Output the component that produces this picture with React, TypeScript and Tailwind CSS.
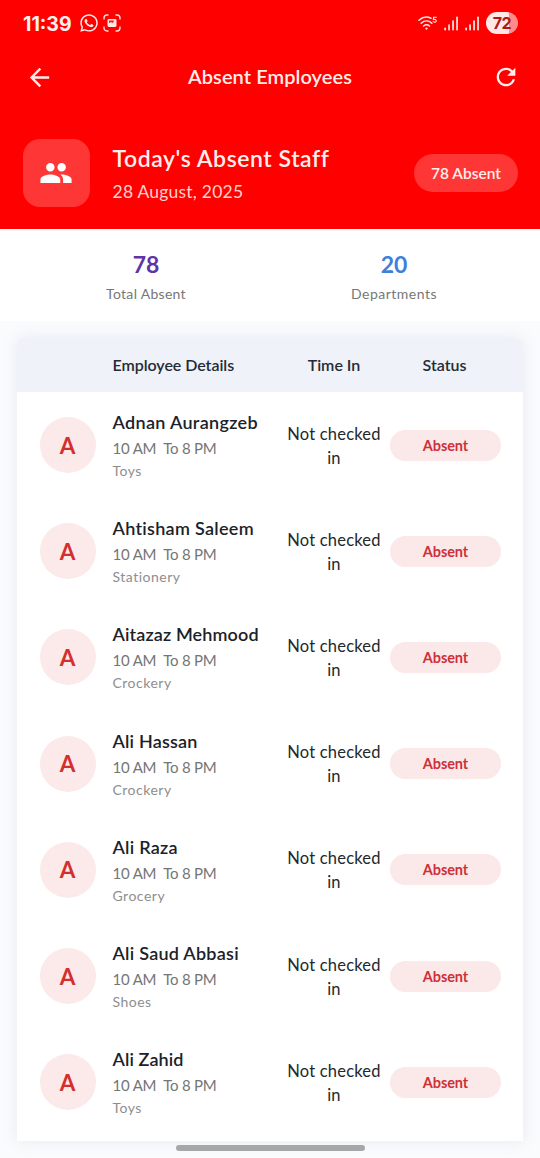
import { MdArrowBack, MdRefresh, MdPeople } from "react-icons/md";
import { FaWhatsapp } from "react-icons/fa";

type Employee = { name: string; department: string; nameTracking: string };

const employees: Employee[] = [
  { name: "Adnan Aurangzeb", department: "Toys", nameTracking: "tracking-[0.33px]" },
  { name: "Ahtisham Saleem", department: "Stationery", nameTracking: "tracking-[0.3px]" },
  { name: "Aitazaz Mehmood", department: "Crockery", nameTracking: "tracking-[0.13px]" },
  { name: "Ali Hassan", department: "Crockery", nameTracking: "tracking-[0.2px]" },
  { name: "Ali Raza", department: "Grocery", nameTracking: "tracking-[0.25px]" },
  { name: "Ali Saud Abbasi", department: "Shoes", nameTracking: "tracking-[0.26px]" },
  { name: "Ali Zahid", department: "Toys", nameTracking: "tracking-[0.1px]" },
];

function ScreenshotIcon() {
  return (
    <svg viewBox="0 0 18 18" className="h-[18px] w-[18px]" fill="none" stroke="#ffe9e6" strokeWidth="1.3" strokeLinecap="round">
      <path d="M1 5V4a3 3 0 0 1 3-3h1M13 1h1a3 3 0 0 1 3 3v1M17 13v1a3 3 0 0 1-3 3h-1M5 17H4a3 3 0 0 1-3-3v-1" />
      <rect x="4.500" y="5" width="9" height="8" rx="1.400" fill="#ffe9e6" stroke="none" />
      <path d="M6 9.300V6.600h4.800v1.100L9.400 8.900 8 8.100Z" fill="#ff1a14" stroke="none" />
    </svg>
  );
}

function WifiIcon() {
  return (
    <svg viewBox="0 0 20 15" className="h-[15px] w-5" fill="none" stroke="#ffe9e6" strokeWidth="1.5" strokeLinecap="round">
      <path d="M1 4.200C4.500 .9 9 .3 13 2.200M3.200 7.200c3.200-2.900 7.500-2.900 10.700 0M5.600 10c2-1.700 3.900-1.700 5.900 0" />
      <circle cx="8.500" cy="12.600" r="1.100" fill="#ffe9e6" stroke="none" />
      <path d="M18.300 1.200h-2.700l-.2 2.300c3.300-.8 3.600 2.600 1.500 2.700-.8 0-1.300-.2-1.700-.6" strokeWidth="1.100" />
    </svg>
  );
}

function SignalIcon() {
  return (
    <svg viewBox="0 0 15 15" className="h-[15px] w-[15px]" fill="#ffe9e6">
      <rect x="0.300" y="11.500" width="1.700" height="3" rx=".7" />
      <rect x="4.200" y="8.300" width="1.700" height="6.200" rx=".7" />
      <rect x="8.200" y="4.300" width="1.700" height="10.200" rx=".7" />
      <rect x="12.200" y="0.500" width="1.700" height="14" rx=".7" />
    </svg>
  );
}

function StatusBar() {
  return (
    <div className="flex h-[46px] items-center justify-between pr-[22px] pl-[23px] text-[#ffeeeb]">
      <div className="flex items-center">
        <span className="w-[56px] pt-px font-['Inter'] text-[19.500px] leading-6 font-bold whitespace-nowrap">11:39</span>
        <FaWhatsapp className="size-[20px]" />
        <span className="ml-[4px]"><ScreenshotIcon /></span>
      </div>
      <div className="flex items-center">
        <WifiIcon />
        <span className="ml-[6px]"><SignalIcon /></span>
        <span className="ml-[6px]"><SignalIcon /></span>
        <div className="ml-[6px] flex h-[22px] w-8 items-center justify-center rounded-full bg-linear-to-r from-[#ffe8e6] from-72% to-[#ff8a8a] to-72% font-['Inter'] text-[16px] font-bold tracking-[-0.5px] text-[#b01818]">
          72
        </div>
      </div>
    </div>
  );
}

function Header() {
  return (
    <header className="h-[229px] shrink-0 bg-[#ff0000]">
      <StatusBar />
      <div className="flex h-[62px] items-center justify-between pr-[20px] pl-[25px] text-[#ffeeeb]">
        <MdArrowBack className="size-[29px]" />
        <h1 className="mr-[6px] pb-[2px] text-[20px] font-semibold tracking-[0.07px]">Absent Employees</h1>
        <MdRefresh className="size-[28px]" />
      </div>
      <div className="mt-[31px] flex h-[68px] items-center pr-[22px] pl-[22.500px]">
        <div className="flex size-[67.500px] items-center justify-center rounded-[17px] bg-[#ff3636]">
          <MdPeople className="size-[34px] text-white" />
        </div>
        <div className="ml-[22.500px] flex-1 pt-[4px] whitespace-nowrap">
          <h2 className="text-[23px] leading-[34px] font-semibold tracking-[0.56px] text-[#ffefec]">Today's Absent Staff</h2>
          <p className="text-[17.500px] leading-[34px] tracking-[0.23px] text-[#ffd0cc]">28 August, 2025</p>
        </div>
        <div className="flex h-[38px] w-[104px] items-center justify-center rounded-full bg-[#ff3636] pt-[2px] text-[15.500px] font-semibold text-[#ffeeeb]">
          <span>78 Absent</span>
        </div>
      </div>
    </header>
  );
}

function Stat({ value, label, color, tracking }: { value: string; label: string; color: string; tracking: string }) {
  return (
    <div className="flex flex-1 flex-col items-center">
      <span className={`text-[23px] leading-[34px] font-bold ${color}`}>{value}</span>
      <span className={`text-[14px] leading-[26px] text-[#777777] ${tracking}`}>{label}</span>
    </div>
  );
}

function EmployeeRow({ employee }: { employee: Employee }) {
  return (
    <div className="flex h-[106.200px] items-center">
      <div className="ml-[22.500px] flex size-[56px] items-center justify-center rounded-full bg-[#fce9e9] pt-px text-[22.500px] font-bold text-[#d32f2f]">
        {employee.name[0]}
      </div>
      <div className="ml-[17px] w-[174.500px] whitespace-nowrap">
        <div className={`text-[18px] leading-[27px] font-semibold text-[#1c2229] ${employee.nameTracking}`}>{employee.name}</div>
        <div className="text-[15px] leading-[25px] tracking-[-0.2px] whitespace-pre text-[#757575]">10 AM  To 8 PM</div>
        <div className="text-[14px] leading-[20px] tracking-[0.5px] text-[#8e8e8e]">{employee.department}</div>
      </div>
      <div className="w-[94px] pt-px text-center text-[16.500px] leading-[24px] tracking-[0.2px] text-[#23282d]">Not checked in</div>
      <div className="ml-[9px] flex h-[31px] w-[111px] items-center justify-center rounded-full bg-[#fbe8e9] pt-px text-[14.500px] font-bold tracking-[-0.1px] text-[#cf3038]">
        Absent
      </div>
    </div>
  );
}

export default function App() {
  return (
    <div className="flex h-[1158px] w-[540px] flex-col overflow-hidden bg-[#fafbfd] font-['Lato','Liberation_Sans',sans-serif]">
      <Header />
      <section className="flex h-[92px] shrink-0 bg-white px-[22px] pt-[18px]">
        <Stat value="78" label="Total Absent" color="text-[#5e35a6]" tracking="tracking-[0.3px]" />
        <Stat value="20" label="Departments" color="text-[#3f80dc]" tracking="tracking-[0.5px]" />
      </section>
      <main className="mx-[17px] mt-[17px] h-[803px] shrink-0 rounded-t-[6px] bg-white shadow-[0_0_16px_rgba(100,116,139,0.13)]">
        <div className="flex h-[54px] items-center rounded-t-[6px] bg-[#eff2f9] text-[16px] font-semibold whitespace-nowrap text-[#252b35]">
          <span className="ml-[95.500px] w-[173.500px] tracking-[-0.05px]">Employee Details</span>
          <span className="w-[96px] text-center">Time In</span>
          <span className="ml-[7px] w-[111px] text-center">Status</span>
        </div>
        {employees.map((employee) => (
          <EmployeeRow key={employee.name} employee={employee} />
        ))}
      </main>
      <div className="mx-auto mt-[3.500px] h-[6px] w-[189px] shrink-0 rounded-full bg-[#a6a7a8]" />
    </div>
  );
}
